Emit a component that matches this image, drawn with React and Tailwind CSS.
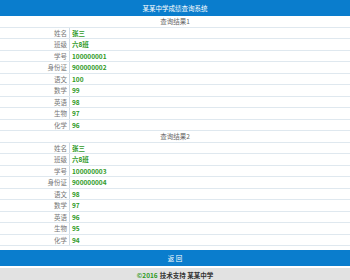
import React from "react";

const results = [
  {
    title: "查询结果1",
    rows: [
      ["姓名", "张三"],
      ["班级", "六8班"],
      ["学号", "100000001"],
      ["身份证", "900000002"],
      ["语文", "100"],
      ["数学", "99"],
      ["英语", "98"],
      ["生物", "97"],
      ["化学", "96"],
    ],
  },
  {
    title: "查询结果2",
    rows: [
      ["姓名", "张三"],
      ["班级", "六8班"],
      ["学号", "100000003"],
      ["身份证", "900000004"],
      ["语文", "98"],
      ["数学", "97"],
      ["英语", "96"],
      ["生物", "95"],
      ["化学", "94"],
    ],
  },
];

const font = { fontFamily: '"Noto Sans CJK SC", "Liberation Sans", sans-serif' };

const App = () => {
  return (
    <div className="w-[350px] h-[280px] bg-white overflow-hidden text-[6.5px] leading-none" style={font}>
      {/* Header */}
      <div className="h-[16px] bg-[#0a7dcd] text-white flex items-center justify-center">
        某某中学成绩查询系统
      </div>

      {results.map((r) => (
        <div key={r.title}>
          <div className="h-[11.5px] flex items-center justify-center text-[#666] border-b border-[#dfe8ef]">
            {r.title}
          </div>
          {r.rows.map(([label, value]) => (
            <div key={label} className="h-[11.5px] flex border-b border-[#dfe8ef]">
              <div className="w-[70px] pr-[2px] flex items-center justify-end text-[#777] border-r border-[#cfdde8]">
                {label}
              </div>
              <div className="flex-1 pl-[2px] flex items-center font-bold text-[#2f9a1f]">
                {value}
              </div>
            </div>
          ))}
        </div>
      ))}

      {/* Return button */}
      <div className="mt-[4px] h-[16px] bg-[#0a7dcd] text-white flex items-center justify-center">
        返 回
      </div>

      {/* Footer */}
      <div className="mt-[2px] h-[14px] bg-[#e2e2e2] flex items-center justify-center font-bold text-[#333]">
        <span className="text-[#2f9a1f]">©2016</span>
        <span className="ml-[2px]">技术支持 某某中学</span>
      </div>
    </div>
  );
};

export default App;
